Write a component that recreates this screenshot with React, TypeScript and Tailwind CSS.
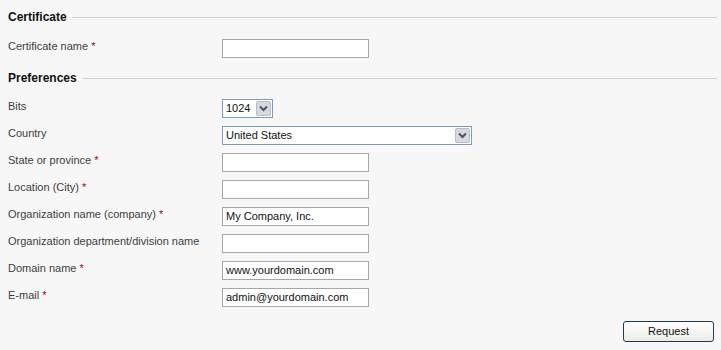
import React from "react";

const font = { fontFamily: '"Liberation Sans", Arial, sans-serif' };

function Heading({ title }: { title: string }) {
  return (
    <div className="flex items-center h-[20px] pl-[8px]">
      <span className="text-[12px] font-bold text-[#111] leading-[14px]">{title}</span>
      <div className="flex-1 h-px bg-[#cfcfcf] ml-[5px] mr-[4px]" />
    </div>
  );
}

function Label({ text, req }: { text: string; req?: boolean }) {
  return (
    <div className="w-[222px] shrink-0 pl-[8px] pt-[1px] text-[11px] leading-[13px] text-[#3d3d3d]">
      {text}
      {req && <span className="text-[#a30000]"> *</span>}
    </div>
  );
}

function TextInput({ value }: { value?: string }) {
  return (
    <div className="w-[147px] h-[19px] bg-white border border-[#a7a6aa] text-[11px] leading-[17px] text-[#111] px-[3px] overflow-hidden whitespace-nowrap">
      {value}
    </div>
  );
}

function Arrow() {
  return (
    <div className="w-[15px] h-[15px] mt-[1px] mr-[1px] bg-[#d7d8e0] border border-[#b9bcc9] rounded-[2px] flex items-center justify-center">
      <svg width="9" height="7" viewBox="0 0 9 7">
        <path d="M1 1.5 L4.5 5 L8 1.5" fill="none" stroke="#4d5266" strokeWidth="2" />
      </svg>
    </div>
  );
}

function Select({ value, width }: { value: string; width: string }) {
  return (
    <div className={`${width} h-[19px] bg-white border border-[#7f9db9] flex items-start text-[11px] leading-[17px] text-[#111]`}>
      <div className="flex-1 px-[3px] overflow-hidden whitespace-nowrap">{value}</div>
      <Arrow />
    </div>
  );
}

function Row({ children }: { children: React.ReactNode }) {
  return <div className="flex items-start h-[19px]">{children}</div>;
}

export default function App() {
  return (
    <div className="w-[721px] h-[350px] bg-[#f8f7f7] overflow-hidden" style={font}>
      <div className="pt-[7px]">
        <Heading title="Certificate" />
        <div className="mt-[12px]">
          <Row>
            <Label text="Certificate name" req />
            <TextInput />
          </Row>
        </div>
        <div className="mt-[10px]">
          <Heading title="Preferences" />
        </div>
        <div className="mt-[11px] flex flex-col gap-[8px]">
          <Row>
            <Label text="Bits" />
            <Select value="1024" width="w-[51px]" />
          </Row>
          <Row>
            <Label text="Country" />
            <Select value="United States" width="w-[250px]" />
          </Row>
          <Row>
            <Label text="State or province" req />
            <TextInput />
          </Row>
          <Row>
            <Label text="Location (City)" req />
            <TextInput />
          </Row>
          <Row>
            <Label text="Organization name (company)" req />
            <TextInput value="My Company, Inc." />
          </Row>
          <Row>
            <Label text="Organization department/division name" />
            <TextInput />
          </Row>
          <Row>
            <Label text="Domain name" req />
            <TextInput value="www.yourdomain.com" />
          </Row>
          <Row>
            <Label text="E-mail" req />
            <TextInput value="admin@yourdomain.com" />
          </Row>
        </div>
        <div className="flex justify-end mt-[14px] pr-[7px]">
          <button className="w-[91px] h-[21px] rounded-[3px] border border-[#1c3a5a] bg-gradient-to-b from-white to-[#ecebe6] text-[11px] text-[#111] leading-[19px]" style={font}>
            Request
          </button>
        </div>
      </div>
    </div>
  );
}
